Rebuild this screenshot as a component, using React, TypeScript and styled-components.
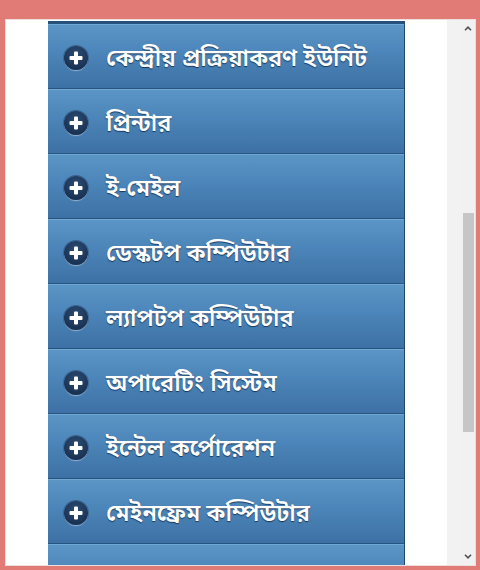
import React from "react";
import styled, { createGlobalStyle } from "styled-components";

const GlobalStyle = createGlobalStyle`
  html, body { margin: 0; padding: 0; }
  body {
    background: #e07b76;
    font-family: "Noto Sans Bengali", "Noto Serif Bengali", "Lohit Bengali", "Vrinda", "Noto Sans", sans-serif;
  }
`;

const Page = styled.div`
  width: 480px;
  height: 570px;
  box-sizing: border-box;
  padding: 19px 4px 0 5px;
`;

const Frame = styled.div`
  height: 547px;
  box-sizing: border-box;
  background: #ffffff;
  border: 1px solid #efdcdc;
  display: flex;
  overflow: hidden;
`;

const Viewport = styled.div`
  flex: 1;
  display: flex;
  padding-left: 42px;
  overflow: hidden;
`;

const Menu = styled.ul`
  list-style: none;
  margin: 1px 0 0;
  padding: 0;
  width: 357px;
  box-sizing: border-box;
  border-top: 3px solid #24527c;
  border-right: 1px solid #1f4b72;
  display: flex;
  flex-direction: column;
`;

const Row = styled.li`
  flex: none;
  height: 65px;
  box-sizing: border-box;
  display: flex;
  align-items: center;
  padding-left: 16px;
  gap: 18px;
  background: linear-gradient(to bottom, #5b96c7 0%, #4c85b9 45%, #3d71a5 100%);
  border-bottom: 1px solid #28557f;
  box-shadow: inset 0 1px 0 rgba(140, 190, 230, 0.45);
`;

const Badge = styled.span`
  flex: none;
  width: 24px;
  height: 24px;
  margin-top: 3px;
  border-radius: 50%;
  background: radial-gradient(circle at 50% 35%, #2c4d74 0%, #1a3354 70%);
  box-shadow: 0 1px 1px rgba(200, 225, 245, 0.7), 0 0 0 1px rgba(20, 40, 70, 0.4);
  display: flex;
  align-items: center;
  justify-content: center;
`;

const Label = styled.span`
  color: #ffffff;
  font-size: 23.5px;
  font-weight: 600;
  line-height: 1;
  margin-top: 9px;
  white-space: nowrap;
  text-shadow: 0 1px 1px rgba(10, 30, 60, 0.75);
`;

const Strip = styled.div`
  flex: none;
  width: 14px;
  background: #f2f2f2;
`;

const ScrollBar = styled.div`
  flex: none;
  width: 14px;
  background: #f1f1f1;
  display: flex;
  flex-direction: column;
`;

const ArrowButton = styled.div`
  flex: none;
  height: 17px;
  display: flex;
  align-items: center;
  justify-content: center;
`;

const Track = styled.div`
  flex: 1;
  display: flex;
  flex-direction: column;
  align-items: center;
`;

const Thumb = styled.div`
  width: 11px;
  background: #c6c6c6;
`;

const items = [
  "কেন্দ্রীয় প্রক্রিয়াকরণ ইউনিট",
  "প্রিন্টার",
  "ই-মেইল",
  "ডেস্কটপ কম্পিউটার",
  "ল্যাপটপ কম্পিউটার",
  "অপারেটিং সিস্টেম",
  "ইন্টেল কর্পোরেশন",
  "মেইনফ্রেম কম্পিউটার",
];

const Plus = () => (
  <svg width="14" height="14" viewBox="0 0 14 14">
    <rect x="5" y="0.5" width="4" height="13" rx="1" fill="#ffffff" />
    <rect x="0.5" y="5" width="13" height="4" rx="1" fill="#ffffff" />
  </svg>
);

const Chevron = ({ up }: { up: boolean }) => (
  <svg width="8" height="5" viewBox="0 0 8 5">
    <polyline
      points={up ? "1,4.2 4,1.2 7,4.2" : "1,0.8 4,3.8 7,0.8"}
      fill="none"
      stroke="#505050"
      strokeWidth="1.6"
    />
  </svg>
);

export default function App() {
  const thumbTop = 176;
  const thumbHeight = 219;
  return (
    <>
      <GlobalStyle />
      <Page>
        <Frame>
          <Viewport>
            <Menu>
              {items.map((t) => (
                <Row key={t}>
                  <Badge>
                    <Plus />
                  </Badge>
                  <Label>{t}</Label>
                </Row>
              ))}
              <Row />
            </Menu>
          </Viewport>
          <Strip />
          <ScrollBar>
            <ArrowButton>
              <Chevron up />
            </ArrowButton>
            <Track>
              <Thumb style={{ marginTop: thumbTop, height: thumbHeight }} />
            </Track>
            <ArrowButton>
              <Chevron up={false} />
            </ArrowButton>
          </ScrollBar>
        </Frame>
      </Page>
    </>
  );
}
